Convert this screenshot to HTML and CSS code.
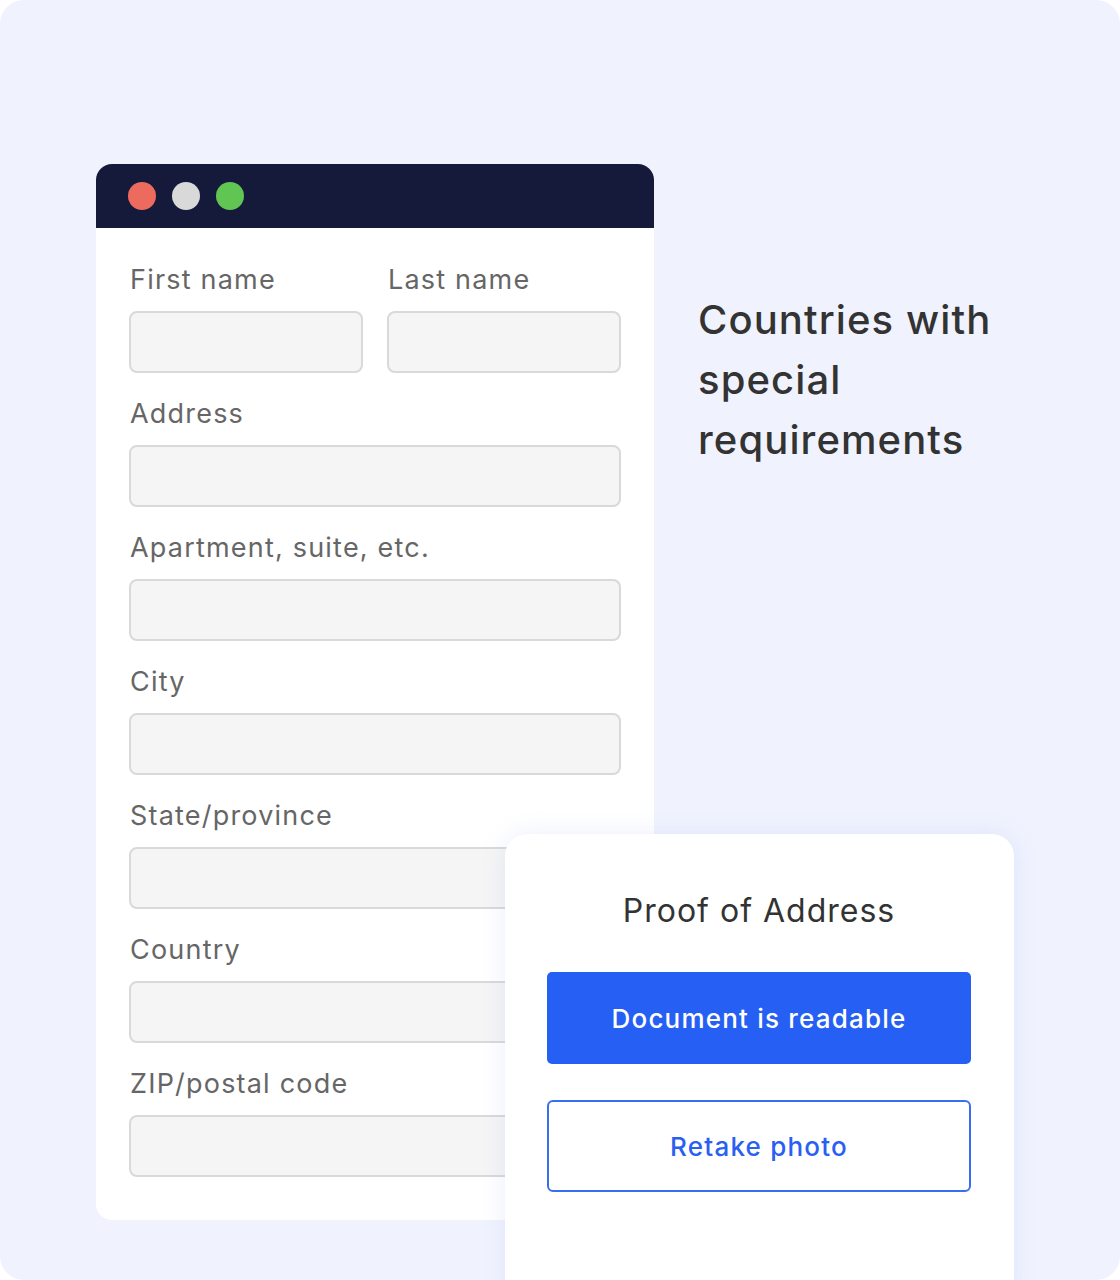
FILE: index.html
```html
<!DOCTYPE html>
<html>
<head>
<meta charset="utf-8">
<link rel="stylesheet" href="styles.css">
</head>
<body>
<div class="page">
  <div class="row">
    <div class="window">
      <div class="titlebar">
        <span class="dot red"></span>
        <span class="dot grey"></span>
        <span class="dot green"></span>
      </div>
      <div class="form">
        <div class="pair">
          <div class="field">
            <div class="label">First name</div>
            <div class="input"></div>
          </div>
          <div class="field">
            <div class="label">Last name</div>
            <div class="input"></div>
          </div>
        </div>
        <div class="field">
          <div class="label">Address</div>
          <div class="input"></div>
        </div>
        <div class="field">
          <div class="label">Apartment, suite, etc.</div>
          <div class="input"></div>
        </div>
        <div class="field">
          <div class="label">City</div>
          <div class="input"></div>
        </div>
        <div class="field">
          <div class="label">State/province</div>
          <div class="input"></div>
        </div>
        <div class="field">
          <div class="label">Country</div>
          <div class="input"></div>
        </div>
        <div class="field">
          <div class="label">ZIP/postal code</div>
          <div class="input"></div>
        </div>
      </div>
    </div>
    <h1 class="heading">Countries with special requirements</h1>
  </div>
  <div class="proof">
    <div class="proof-title">Proof of Address</div>
    <div class="btn primary">Document is readable</div>
    <div class="btn outline">Retake photo</div>
  </div>
</div>
</body>
</html>
```

FILE: styles.css
```css
html, body {
  margin: 0;
  padding: 0;
  background: #ffffff;
}
body {
  font-family: "Inter", "Open Sans", sans-serif;
}
.page {
  position: relative;
  width: 1120px;
  height: 1280px;
  background: #f0f3fe;
  border-radius: 24px;
  overflow: hidden;
  box-sizing: border-box;
  padding: 164px 0 0 96px;
}
.row {
  display: flex;
  align-items: flex-start;
}
.window {
  width: 558px;
  flex: none;
  background: #ffffff;
  border-radius: 16px;
  overflow: hidden;
}
.titlebar {
  height: 64px;
  background: #151a3a;
  display: flex;
  align-items: center;
  gap: 16px;
  padding-left: 32px;
}
.dot {
  width: 28px;
  height: 28px;
  border-radius: 50%;
}
.red { background: #ed6a5e; }
.grey { background: #d9d9d9; }
.green { background: #61c554; }
.form {
  padding: 37px 33px 43px 33px;
  display: flex;
  flex-direction: column;
  gap: 26px;
}
.pair {
  display: flex;
  gap: 24px;
}
.pair .field {
  flex: 1;
}
.label {
  font-size: 27px;
  line-height: 30px;
  color: #666666;
  padding-left: 1px;
  margin-bottom: 16px;
  letter-spacing: 1.2px;
}
.input {
  height: 62px;
  box-sizing: border-box;
  background: #f5f5f5;
  border: 2px solid #d9d9d9;
  border-radius: 8px;
}
.heading {
  margin: 126px 0 0 44px;
  font-weight: 500;
  font-size: 40px;
  line-height: 60px;
  color: #333333;
  width: 320px;
  letter-spacing: 1.1px;
}
.proof {
  position: absolute;
  left: 505px;
  top: 834px;
  width: 509px;
  height: 480px;
  box-sizing: border-box;
  background: #ffffff;
  border-radius: 22px;
  box-shadow: 0 0 24px rgba(120, 140, 220, 0.14);
  padding: 57px 43px 0 42px;
  display: flex;
  flex-direction: column;
}
.proof-title {
  text-align: center;
  font-size: 32px;
  line-height: 40px;
  color: #333333;
  margin-bottom: 41px;
  letter-spacing: 1px;
}
.btn {
  height: 92px;
  box-sizing: border-box;
  display: flex;
  align-items: center;
  justify-content: center;
  font-size: 26px;
  font-weight: 500;
  border-radius: 5px;
  letter-spacing: 1.2px;
}
.primary {
  background: #255ff4;
  color: #ffffff;
  margin-bottom: 36px;
}
.outline {
  border: 2px solid #3a6ef0;
  color: #2a60f2;
  background: #ffffff;
  border-radius: 6px;
}
```
